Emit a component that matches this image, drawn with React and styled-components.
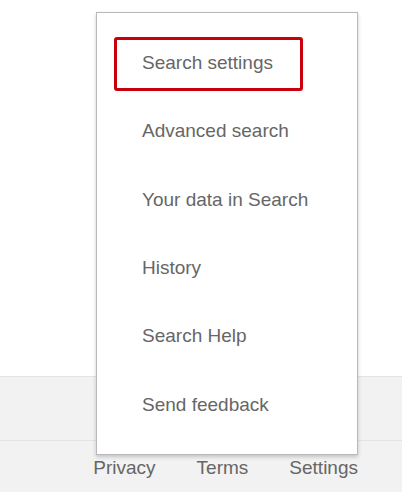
import React from "react";
import styled, { createGlobalStyle } from "styled-components";

const Global = createGlobalStyle`
  html, body { margin: 0; padding: 0; background: #fff; }
  body { font-family: "Liberation Sans", Arial, sans-serif; }
`;

const Page = styled.div`
  position: relative;
  width: 402px;
  height: 492px;
  overflow: hidden;
  display: flex;
  flex-direction: column;
`;

const Main = styled.div`
  height: 376px;
  background: #fff;
`;

const Band = styled.div`
  height: 63px;
  background: #f2f2f2;
  border-top: 1px solid #e4e4e4;
`;

const Footer = styled.footer`
  flex: 1;
  background: #f2f2f2;
  border-top: 1px solid #e4e4e4;
  display: flex;
  justify-content: flex-end;
  align-items: center;
  gap: 41px;
  padding: 2px 44px 0 0;
`;

const FooterLink = styled.a`
  font-size: 19px;
  color: #666;
  text-decoration: none;
`;

const Menu = styled.ul`
  position: absolute;
  left: 96px;
  top: 12px;
  width: 262px;
  height: 443px;
  box-sizing: border-box;
  margin: 0;
  padding: 17px 0 0 0;
  list-style: none;
  background: #fff;
  border: 1px solid #b9b9b9;
  box-shadow: 0 2px 4px rgba(0, 0, 0, 0.2);
`;

const Item = styled.li`
  display: flex;
  align-items: center;
  height: 68.3px;
  padding-left: 17px;
`;

const Label = styled.span`
  display: inline-flex;
  align-items: center;
  box-sizing: border-box;
  height: 54px;
  width: ${(p) => (p.$active ? "189px" : "auto")};
  padding: 0 25px 2px;
  border: 3px solid ${(p) => (p.$active ? "#c8000c" : "transparent")};
  border-radius: 3px;
  font-size: 19px;
  color: #666;
  white-space: nowrap;
`;

const items = [
  "Search settings",
  "Advanced search",
  "Your data in Search",
  "History",
  "Search Help",
  "Send feedback",
];

export default function App() {
  return (
    <>
      <Global />
      <Page>
        <Main />
        <Band />
        <Footer>
          <FooterLink>Privacy</FooterLink>
          <FooterLink>Terms</FooterLink>
          <FooterLink>Settings</FooterLink>
        </Footer>
        <Menu>
          {items.map((t, i) => (
            <Item key={t}>
              <Label $active={i === 0}>{t}</Label>
            </Item>
          ))}
        </Menu>
      </Page>
    </>
  );
}
